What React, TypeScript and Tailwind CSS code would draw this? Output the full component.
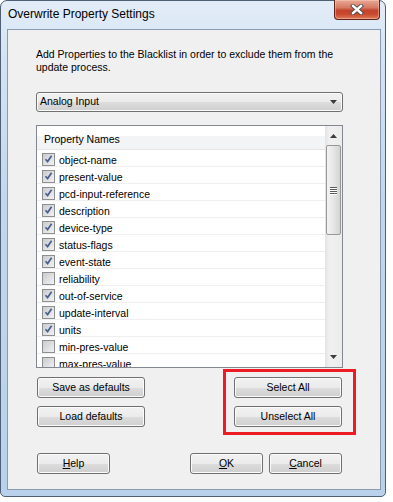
import React from 'react';

const properties: [string, boolean][] = [
  ['object-name', true],
  ['present-value', true],
  ['pcd-input-reference', true],
  ['description', true],
  ['device-type', true],
  ['status-flags', true],
  ['event-state', true],
  ['reliability', false],
  ['out-of-service', true],
  ['update-interval', true],
  ['units', true],
  ['min-pres-value', false],
  ['max-pres-value', false],
];

const Checkbox = ({ checked }: { checked: boolean }) => (
  <span className="flex h-[13px] w-[13px] shrink-0 items-center justify-center border border-[#8e8f8f] bg-white">
    <span className="relative h-[11px] w-[11px] bg-[linear-gradient(135deg,#c9cbce,#f2f2f3)]">
      {checked && (
        <svg width="11" height="11" viewBox="0 0 11 11" className="absolute left-0 top-0">
          <path d="M2.5 5.2 L4.6 7.6 L8.6 1.8" fill="none" stroke="#4b5f8e" strokeWidth="1.7" />
        </svg>
      )}
    </span>
  </span>
);

const Button = ({ children, className = '' }: { children: React.ReactNode; className?: string }) => (
  <button
    className={
      'flex h-[21px] items-center justify-center rounded-[3px] border border-[#707070] bg-[linear-gradient(#f2f2f2,#ebebeb_50%,#dddddd_50%,#cfcfcf)] text-[10.5px] leading-none text-black shadow-[inset_0_0_0_1px_#fbfbfb] ' +
      className
    }
  >
    {children}
  </button>
);

const Arrow = ({ down }: { down?: boolean }) => (
  <svg width="7" height="4" viewBox="0 0 7 4">
    <path d={down ? 'M0 0 H7 L3.5 4 Z' : 'M0 4 H7 L3.5 0 Z'} fill="#3c3c3c" />
  </svg>
);

const ScrollBar = () => (
  <div className="flex w-[17px] shrink-0 flex-col items-center bg-[linear-gradient(90deg,#e3e3e3,#f0f0f0_25%,#ececec)]">
    <div className="flex h-[19px] items-center justify-center pt-px">
      <Arrow />
    </div>
    <div className="flex h-[90px] w-[15px] flex-col items-center justify-center gap-[1px] rounded-[2px] border border-[#979797] bg-[linear-gradient(90deg,#f4f4f4,#e6e6e6_50%,#d3d3d3)]">
      {[0, 1, 2, 3].map((i) => (
        <span key={i} className="h-px w-[7px] bg-[#5a5a5a] shadow-[0_1px_0_#ffffff]" />
      ))}
    </div>
    <div className="flex-1" />
    <div className="flex h-[19px] items-center justify-center pb-[2px]">
      <Arrow down />
    </div>
  </div>
);

const App = () => {
  return (
    <div className="h-[502px] w-[393px] bg-white font-['Liberation_Sans',Arial,sans-serif] text-black">
      <div className="flex h-[497px] w-[386px] flex-col rounded-t-[7px] rounded-b-[5px] border border-[#4f5f75] bg-[linear-gradient(180deg,#e3edf8,#d3e3f3_12%,#c2d7ee_40%,#b9d1eb)]">
        {/* Title bar */}
        <div className="flex h-[28px] shrink-0">
          <span className="pl-[7px] pt-[5px] text-[12px] leading-[16px]">Overwrite Property Settings</span>
          <div className="ml-auto mr-[5px] -mt-px flex h-[20px] w-[46px] items-center justify-center rounded-b-[4px] border border-t-0 border-[#5e2419] bg-[linear-gradient(#e8a897,#d77a63_40%,#c2432b_55%,#c9492f_75%,#de7a56)] shadow-[inset_0_0_0_1px_rgba(255,210,190,0.45)]">
            <svg width="14" height="11" viewBox="0 0 14 11">
              <path d="M3 2 L11 9 M11 2 L3 9" stroke="#4a4a4a" strokeWidth="4.2" strokeLinecap="square" />
              <path d="M3 2 L11 9 M11 2 L3 9" stroke="#ffffff" strokeWidth="2.4" strokeLinecap="square" />
            </svg>
          </div>
        </div>

        {/* Client area */}
        <div className="ml-[6px] flex h-[461px] w-[374px] flex-col border border-[#8a9bb0] bg-[#f0f0f0] pl-[28px] pr-[37px] text-[10.5px]">
          <p className="mt-[18px] leading-[13px]">
            Add Properties to the Blacklist in order to exclude them from the update process.
          </p>

          <div className="mt-[18px] flex h-[20px] items-center justify-between rounded-[3px] border border-[#707070] bg-[linear-gradient(#f2f2f2,#ebebeb_50%,#dddddd_50%,#cfcfcf)] pl-[3px] pr-[5px] shadow-[inset_0_0_0_1px_#fbfbfb]">
            <span>Analog Input</span>
            <Arrow down />
          </div>

          <div className="mt-[13px] flex h-[243px] overflow-hidden border border-[#828790] bg-white">
            <div className="flex min-w-0 flex-1 flex-col">
              <div className="flex h-[24px] shrink-0 items-center border-b border-[#e6e6e6] bg-[linear-gradient(#ffffff,#ffffff_42%,#f3f4f6_42%,#f3f4f6)] pl-[7px] pt-[4px]">
                Property Names
              </div>
              {properties.map(([name, checked]) => (
                <div key={name} className="flex h-[17px] shrink-0 items-center gap-[4px] border-b border-[#efefef] pl-[5px] pt-[3px]">
                  <Checkbox checked={checked} />
                  <span className="leading-[14px]">{name}</span>
                </div>
              ))}
            </div>
            <ScrollBar />
          </div>

          <div className="mt-[9px] flex justify-between px-px">
            <div className="flex flex-col gap-[8px]">
              <Button className="w-[108px]">Save as defaults</Button>
              <Button className="w-[108px]">Load defaults</Button>
            </div>
            <div className="relative flex flex-col gap-[8px]">
              <Button className="w-[108px]">Select All</Button>
              <Button className="w-[108px]">Unselect All</Button>
              <div className="absolute -left-[11px] -top-[8px] h-[66px] w-[133px] border-[3px] border-[#ed1c24]" />
            </div>
          </div>

          <div className="mt-[26px] flex px-px">
            <Button className="w-[73px]">
              <span className="underline underline-offset-[1px]">H</span>elp
            </Button>
            <Button className="ml-auto w-[73px] border-[#3c7fb1] shadow-[inset_0_0_0_1px_#bfe4fb]">
              <span className="underline underline-offset-[1px]">O</span>K
            </Button>
            <Button className="ml-[6px] w-[73px]">
              <span className="underline underline-offset-[1px]">C</span>ancel
            </Button>
          </div>
        </div>
      </div>
    </div>
  );
};

export default App;
